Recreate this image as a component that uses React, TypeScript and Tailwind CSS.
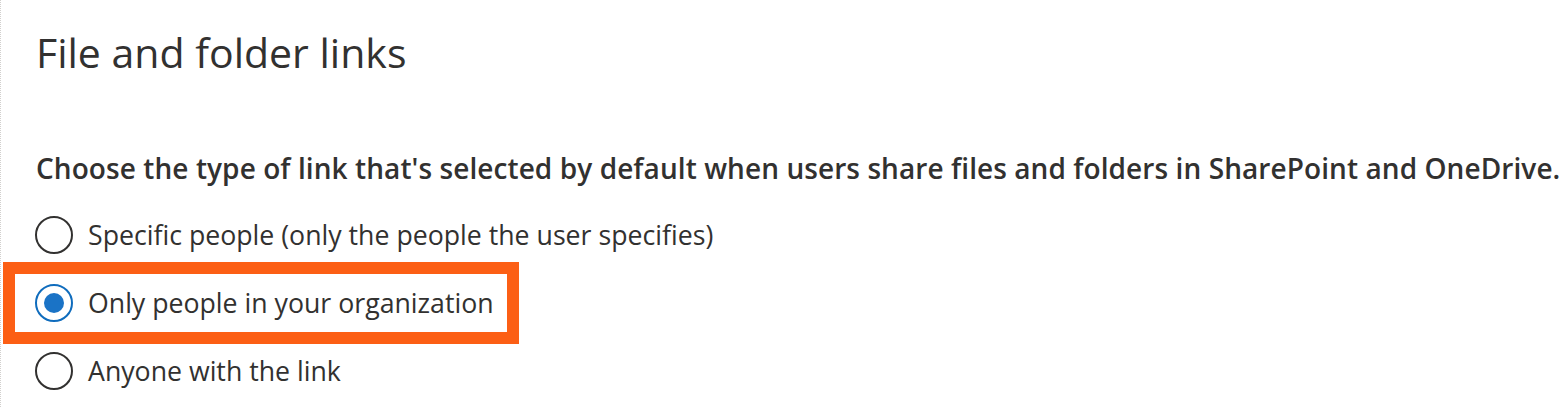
import { useState } from "react";

const options = [
  { id: "specific", label: "Specific people (only the people the user specifies)" },
  { id: "org", label: "Only people in your organization" },
  { id: "anyone", label: "Anyone with the link" },
];

function Radio({ checked }: { checked: boolean }) {
  return checked ? (
    <span className="flex h-[38px] w-[38px] shrink-0 items-center justify-center rounded-full border-2 border-[#0f6cbd]">
      <span className="h-[20px] w-[20px] rounded-full bg-[#1a73c6]" />
    </span>
  ) : (
    <span className="h-[38px] w-[38px] shrink-0 rounded-full border-2 border-[#323130]" />
  );
}

export default function App() {
  const [value, setValue] = useState("org");

  return (
    <main className="h-[407px] w-[1567px] overflow-hidden bg-white border-l border-dotted border-[#d2d0ce] font-['Open_Sans',sans-serif] text-[#323130]">
      <h1 className="pl-[35px] pt-[24px] text-[41px] leading-[56px] font-medium">File and folder links</h1>

      <p className="mt-[70px] pl-[35px] text-[28px] leading-[36px] font-semibold tracking-[0.08px]">
        Choose the type of link that's selected by default when users share files and folders in SharePoint and OneDrive.
      </p>

      <div className="mt-[22px] flex flex-col">
        {options.map((o) => {
          const checked = value === o.id;
          return (
            <div
              key={o.id}
              className={
                checked
                  ? "ml-[2px] w-[516px] border-[12px] border-[#fc5f15] py-[9px] pl-[20px]"
                  : "py-[7px] pl-[34px]"
              }
            >
              <label className="flex h-[40px] cursor-pointer items-center gap-[15px]" onClick={() => setValue(o.id)}>
                <Radio checked={checked} />
                <span className="text-[26.7px] leading-[36px]">{o.label}</span>
              </label>
            </div>
          );
        })}
      </div>
    </main>
  );
}
